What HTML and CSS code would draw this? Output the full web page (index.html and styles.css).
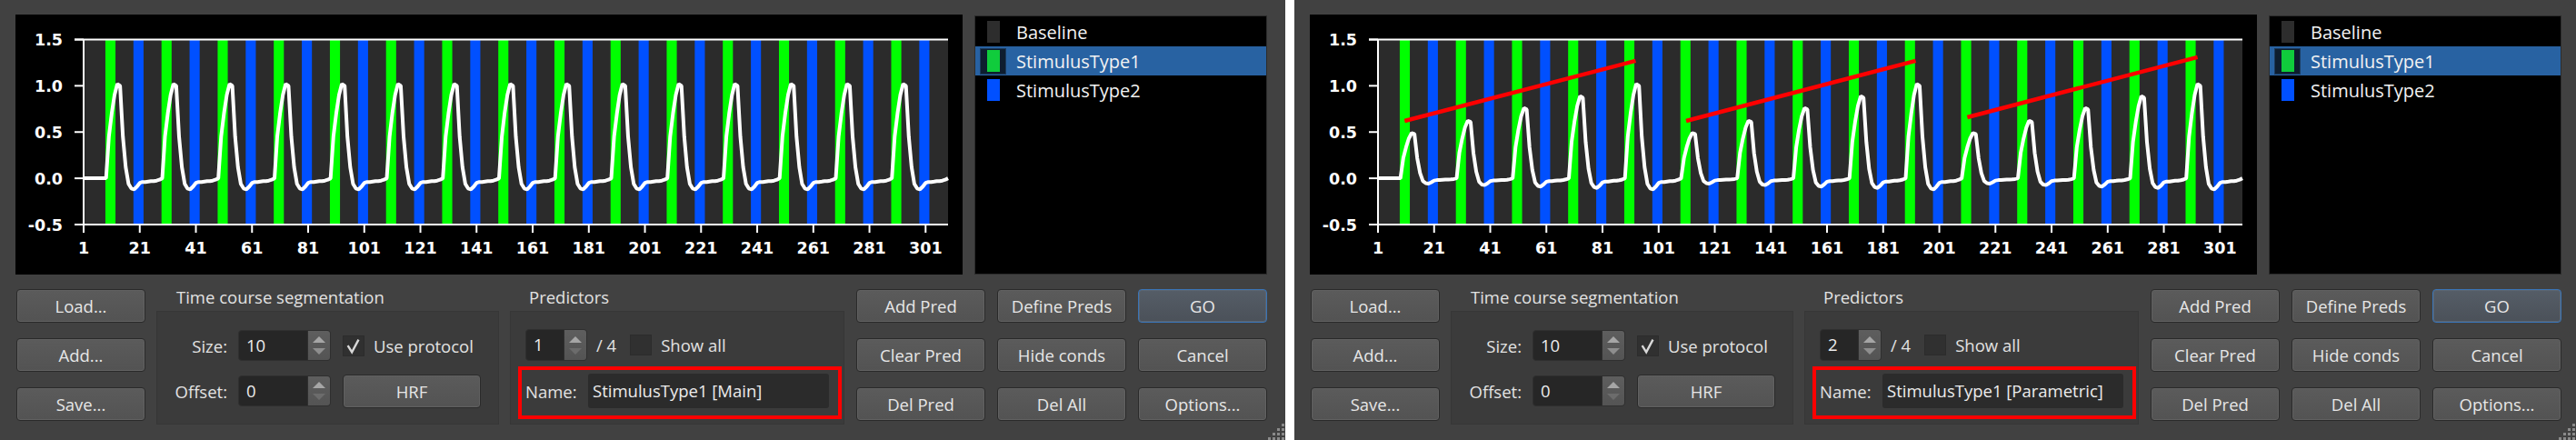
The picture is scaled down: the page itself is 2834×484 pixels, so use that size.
FILE: index.html
```html
<!DOCTYPE html>
<html lang="en">
<head>
    <meta charset="UTF-8">
    <title>Define Predictors</title>
    <link rel="stylesheet" href="styles.css">
</head>
<body>
    <!-- Main predictor -->
    <div class="panel">
        <div class="top">
            <div class="chart" data-mode="main"><svg></svg></div>
            <div class="legend">
                <div class="legend-row"><span class="swatch"><i class="c-base"></i></span>Baseline</div>
                <div class="legend-row selected"><span class="swatch"><i class="c-stim1"></i></span>StimulusType1</div>
                <div class="legend-row"><span class="swatch"><i class="c-stim2"></i></span>StimulusType2</div>
            </div>
        </div>
        <div class="controls">
            <div class="btn-col">
                <button class="btn">Load...</button>
                <button class="btn">Add...</button>
                <button class="btn">Save...</button>
            </div>
            <div class="group tc">
                <div class="group-title">Time course segmentation</div>
                <div class="group-box tc-grid">
                    <span class="field-label">Size:</span>
                    <div class="spin"><span class="spin-value">10</span><span class="spin-arrows"><i class="up"></i><i class="down"></i></span></div>
                    <div class="check-row"><span class="checkbox"><svg viewBox="0 0 24 23"><polyline points="5,11 10,19 18,4"/></svg></span>Use protocol</div>
                    <span class="field-label">Offset:</span>
                    <div class="spin"><span class="spin-value">0</span><span class="spin-arrows"><i class="up"></i><i class="down off"></i></span></div>
                    <button class="btn hrf">HRF</button>
                </div>
            </div>
            <div class="group pred">
                <div class="group-title">Predictors</div>
                <div class="group-box">
                    <div class="pred-row">
                        <div class="spin small"><span class="spin-value">1</span><span class="spin-arrows"><i class="up"></i><i class="down off"></i></span></div>
                        <span class="count">/ 4</span>
                        <span class="checkbox"></span>
                        <span class="check-text">Show all</span>
                    </div>
                    <div class="name-row">
                        <span class="name-label">Name:</span>
                        <div class="text-field">StimulusType1 [Main]</div>
                    </div>
                </div>
            </div>
            <div class="btn-grid">
                <button class="btn">Add Pred</button>
                <button class="btn">Define Preds</button>
                <button class="btn default">GO</button>
                <button class="btn">Clear Pred</button>
                <button class="btn">Hide conds</button>
                <button class="btn">Cancel</button>
                <button class="btn">Del Pred</button>
                <button class="btn">Del All</button>
                <button class="btn">Options...</button>
            </div>
        </div>
        <svg class="grip" viewBox="0 0 20 19"><g fill="#8a8a8a"><rect x="16" y="1" width="3" height="3"/><rect x="11" y="6" width="3" height="3"/><rect x="16" y="6" width="3" height="3"/><rect x="6" y="11" width="3" height="3"/><rect x="11" y="11" width="3" height="3"/><rect x="16" y="11" width="3" height="3"/><rect x="1" y="16" width="3" height="3"/><rect x="6" y="16" width="3" height="3"/><rect x="11" y="16" width="3" height="3"/><rect x="16" y="16" width="3" height="3"/></g></svg>
    </div>

    <!-- Parametric predictor -->
    <div class="panel second">
        <div class="top">
            <div class="chart" data-mode="parametric"><svg></svg></div>
            <div class="legend">
                <div class="legend-row"><span class="swatch"><i class="c-base"></i></span>Baseline</div>
                <div class="legend-row selected"><span class="swatch"><i class="c-stim1"></i></span>StimulusType1</div>
                <div class="legend-row"><span class="swatch"><i class="c-stim2"></i></span>StimulusType2</div>
            </div>
        </div>
        <div class="controls">
            <div class="btn-col">
                <button class="btn">Load...</button>
                <button class="btn">Add...</button>
                <button class="btn">Save...</button>
            </div>
            <div class="group tc">
                <div class="group-title">Time course segmentation</div>
                <div class="group-box tc-grid">
                    <span class="field-label">Size:</span>
                    <div class="spin"><span class="spin-value">10</span><span class="spin-arrows"><i class="up"></i><i class="down"></i></span></div>
                    <div class="check-row"><span class="checkbox"><svg viewBox="0 0 24 23"><polyline points="5,11 10,19 18,4"/></svg></span>Use protocol</div>
                    <span class="field-label">Offset:</span>
                    <div class="spin"><span class="spin-value">0</span><span class="spin-arrows"><i class="up"></i><i class="down off"></i></span></div>
                    <button class="btn hrf">HRF</button>
                </div>
            </div>
            <div class="group pred">
                <div class="group-title">Predictors</div>
                <div class="group-box">
                    <div class="pred-row">
                        <div class="spin small"><span class="spin-value">2</span><span class="spin-arrows"><i class="up"></i><i class="down"></i></span></div>
                        <span class="count">/ 4</span>
                        <span class="checkbox"></span>
                        <span class="check-text">Show all</span>
                    </div>
                    <div class="name-row">
                        <span class="name-label">Name:</span>
                        <div class="text-field">StimulusType1 [Parametric]</div>
                    </div>
                </div>
            </div>
            <div class="btn-grid">
                <button class="btn">Add Pred</button>
                <button class="btn">Define Preds</button>
                <button class="btn default">GO</button>
                <button class="btn">Clear Pred</button>
                <button class="btn">Hide conds</button>
                <button class="btn">Cancel</button>
                <button class="btn">Del Pred</button>
                <button class="btn">Del All</button>
                <button class="btn">Options...</button>
            </div>
        </div>
        <svg class="grip" viewBox="0 0 20 19"><g fill="#8a8a8a"><rect x="16" y="1" width="3" height="3"/><rect x="11" y="6" width="3" height="3"/><rect x="16" y="6" width="3" height="3"/><rect x="6" y="11" width="3" height="3"/><rect x="11" y="11" width="3" height="3"/><rect x="16" y="11" width="3" height="3"/><rect x="1" y="16" width="3" height="3"/><rect x="6" y="16" width="3" height="3"/><rect x="11" y="16" width="3" height="3"/><rect x="16" y="16" width="3" height="3"/></g></svg>
    </div>

    <script src="chart.js"></script>
</body>
</html>
```

FILE: styles.css
```css
* {
    box-sizing: border-box;
}

body {
    margin: 0;
    background: #ffffff;
    display: flex;
    gap: 10px;
    font-family: 'Open Sans', sans-serif;
    color: #e2e2e2;
}

.panel {
    position: relative;
    width: 1414px;
    height: 484px;
    background: #414141;
    padding: 16px 20px 0 17px;
}

.panel.second {
    width: 1410px;
    padding-right: 16px;
}

.top {
    display: flex;
    gap: 13px;
    height: 286px;
}

.chart {
    flex: 1;
    background: #000;
}

.chart svg {
    display: block;
    width: 100%;
    height: 100%;
}

/* Legend */
.legend {
    width: 322px;
    margin-top: 1px;
    background: #000;
    border: 1px solid #2c2c2c;
    padding-top: 1px;
}

.legend-row {
    display: flex;
    align-items: center;
    height: 32px;
    font-size: 20px;
    color: #f2f2f2;
}

.swatch {
    width: 29px;
    height: 29px;
    margin: 0 11px 0 5px;
    display: flex;
    align-items: center;
    justify-content: center;
    border: 1px solid transparent;
}

.swatch i {
    display: block;
    width: 14px;
    height: 24px;
}

.c-base { background: #2d2d2d; }
.c-stim1 { background: #10cc3c; }
.c-stim2 { background: #0050ff; }

.legend-row.selected {
    background: #2862a2;
}

.selected .swatch {
    background: #0e1d2f;
    border-color: #1c3b5e;
}

/* Controls */
.controls {
    display: flex;
    margin-top: 16px;
    padding-left: 1px;
    font-size: 18.5px;
}

.btn {
    height: 37px;
    padding: 0;
    background: linear-gradient(#5b5b5b, #535353);
    border: 1px solid #2a2a2a;
    border-radius: 4px;
    box-shadow: inset 0 0 0 1px #616161;
    color: #e6e6e6;
    font-family: 'Open Sans', sans-serif;
    font-size: 18.5px;
}

.btn.default {
    background: linear-gradient(#555d67, #4b5159);
    border-color: #3a74b6;
    box-shadow: inset 0 0 0 1px #5b6571;
}

.btn-col {
    display: flex;
    flex-direction: column;
    gap: 17px;
    width: 142px;
}

.group {
    margin-left: 12px;
}

.group-title {
    height: 24px;
    line-height: 18px;
    color: #e2e2e2;
}

.tc { width: 377px; }
.tc .group-title { padding-left: 22px; }
.pred { width: 368px; }
.pred .group-title { padding-left: 21px; }

.group-box {
    height: 125px;
    background: #3b3b3b;
    border: 1px solid #363636;
}

.tc-grid {
    display: grid;
    grid-template-columns: 77px 102px 153px;
    grid-template-rows: 36px 36px;
    column-gap: 12px;
    row-gap: 14px;
    padding-top: 19px;
    align-items: center;
}

.field-label {
    text-align: right;
}

.check-row {
    display: flex;
    align-items: center;
    margin-left: 1px;
}

.hrf {
    margin-left: 1px;
}

/* Spin boxes */
.spin {
    display: flex;
    height: 34px;
    background: #262626;
    border: 1px solid #2f2f2f;
    border-radius: 4px;
}

.spin-value {
    flex: 1;
    padding-left: 8px;
    line-height: 32px;
    color: #ececec;
}

.spin-arrows {
    width: 25px;
    display: flex;
    flex-direction: column;
    align-items: center;
    justify-content: center;
    gap: 6px;
    background: linear-gradient(#5e5e5e, #545454);
    border-left: 1px solid #2f2f2f;
    border-radius: 0 3px 3px 0;
}

.spin-arrows i {
    width: 0;
    height: 0;
    border-left: 7px solid transparent;
    border-right: 7px solid transparent;
}

.spin-arrows .up { border-bottom: 7px solid #a6a6a6; }
.spin-arrows .down { border-top: 7px solid #8e8e8e; }
.spin-arrows .down.off { border-top-color: #6c6c6c; }

.checkbox {
    width: 24px;
    height: 23px;
    margin-right: 10px;
    background: #303030;
    border: 1px solid #2c2c2c;
    display: inline-block;
}

.checkbox svg {
    display: block;
    width: 100%;
    height: 100%;
    fill: none;
    stroke: #d8d8d8;
    stroke-width: 2.6;
}

/* Predictors box */
.pred-row {
    display: flex;
    align-items: center;
    height: 35px;
    margin-top: 19px;
    padding-left: 16px;
}

.spin.small {
    width: 68px;
    height: 35px;
}

.count {
    margin: 0 15px 0 10px;
}

.name-row {
    display: flex;
    align-items: center;
    width: 356px;
    height: 58px;
    margin: 6px 0 0 8px;
    padding: 0 0 4px 4px;
    border: 4px solid #ff0000;
}

.name-label {
    width: 69px;
}

.text-field {
    width: 265px;
    height: 38px;
    padding-left: 5px;
    line-height: 38px;
    background: #2b2b2b;
    border-radius: 3px;
    color: #ececec;
}

.btn-grid {
    display: grid;
    grid-template-columns: repeat(3, 142px);
    grid-template-rows: repeat(3, 37px);
    column-gap: 13px;
    row-gap: 17px;
    margin-left: 13px;
}

.grip {
    position: absolute;
    right: 0;
    bottom: 0;
    width: 20px;
    height: 19px;
}
```

FILE: chart.js
```js
const NS = "http://www.w3.org/2000/svg";

// predictor shape after each StimulusType1 onset, one value per volume
const SHAPE = [0, 0.45, 0.7, 0.9, 1.02, 1.0, 0.45, 0.12, -0.06, -0.11, -0.12, -0.09,
               -0.05, -0.04, -0.04, -0.035, -0.03, -0.03, -0.025, -0.015];
const RAMP = [0.48, 0.61, 0.745, 0.87, 1.0];
const ONSETS = [];
for (let k = 0; k < 15; k++) ONSETS.push(9 + 20 * k);

const N_VOLS = 309;

function el(parent, tag, attrs, text) {
    const node = document.createElementNS(NS, tag);
    for (const key in attrs) node.setAttribute(key, attrs[key]);
    if (text !== undefined) node.textContent = text;
    parent.appendChild(node);
    return node;
}

function timecourse(mode) {
    const values = [];
    for (let t = 1; t <= N_VOLS; t++) {
        let v = 0;
        ONSETS.forEach((on, k) => {
            const d = t - on;
            if (d >= 0 && d < SHAPE.length) {
                v = SHAPE[d] * (mode === "parametric" ? RAMP[k % 5] : 1);
            }
        });
        values.push(v);
    }
    return values;
}

function drawChart(box) {
    const svg = box.querySelector("svg");
    const w = box.clientWidth;
    const L = 75, R = w - 16, T = 27.5, B = 231;
    const x = t => L + (t - 1) / (N_VOLS - 1) * (R - L);
    const y = v => T + (1.5 - v) / 2 * (B - T);

    el(svg, "rect", { x: L, y: T, width: R - L, height: B - T, fill: "#2b2b2b" });

    ONSETS.forEach(on => {
        el(svg, "rect", { x: x(on - 0.25), y: T, width: x(on + 3.35) - x(on - 0.25), height: B - T, fill: "#00ff00" });
        el(svg, "rect", { x: x(on + 9.75), y: T, width: x(on + 13.35) - x(on + 9.75), height: B - T, fill: "#0050ff" });
    });

    const axis = { stroke: "#ffffff", "stroke-width": 2 };
    el(svg, "line", Object.assign({ x1: L - 10, x2: R, y1: y(1.5), y2: y(1.5) }, axis));
    el(svg, "line", Object.assign({ x1: L - 10, x2: R, y1: y(-0.5), y2: y(-0.5) }, axis));
    el(svg, "line", Object.assign({ x1: L, x2: L, y1: T, y2: B + 9 }, axis));

    const label = { fill: "#ffffff", "font-family": "DejaVu Sans, sans-serif", "font-weight": "bold", "font-size": 17.5 };
    [1.5, 1.0, 0.5, 0.0, -0.5].forEach(v => {
        el(svg, "line", Object.assign({ x1: L - 10, x2: L, y1: y(v), y2: y(v) }, axis));
        el(svg, "text", Object.assign({ x: 52, y: y(v) + 6.5, "text-anchor": "end" }, label), v.toFixed(1));
    });

    for (let t = 1; t <= 301; t += 20) {
        el(svg, "line", Object.assign({ x1: x(t), x2: x(t), y1: B, y2: B + 9 }, axis));
        el(svg, "text", Object.assign({ x: x(t), y: B + 32, "text-anchor": "middle" }, label), String(t));
    }

    const pts = timecourse(box.dataset.mode).map((v, i) => x(i + 1).toFixed(1) + "," + y(v).toFixed(1));
    el(svg, "polyline", { points: pts.join(" "), fill: "none", stroke: "#ffffff", "stroke-width": 4, "stroke-linejoin": "bevel" });

    if (box.dataset.mode === "parametric") {
        [[10.5, 0.62, 92.8, 1.27], [110.8, 0.62, 192.6, 1.27], [211, 0.66, 293, 1.31]].forEach(s => {
            el(svg, "line", { x1: x(s[0]), y1: y(s[1]), x2: x(s[2]), y2: y(s[3]), stroke: "#ff0000", "stroke-width": 4.5 });
        });
    }
}

document.querySelectorAll(".chart").forEach(drawChart);
```
